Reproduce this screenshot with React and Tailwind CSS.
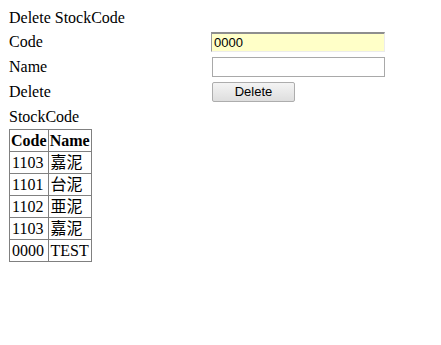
import React from 'react';

const rows = [
  ['1103', '嘉泥'],
  ['1101', '台泥'],
  ['1102', '亜泥'],
  ['1103', '嘉泥'],
  ['0000', 'TEST'],
];

export default function App() {
  return (
    <div className="w-[441px] h-[345px] bg-white pl-[9px] pt-[9px] text-[16px] text-black font-['Liberation_Serif',serif]">
      <div className="h-[20px] leading-[18px]">Delete StockCode</div>

      <div className="flex items-center h-[25px]">
        <div className="w-[202px]">Code</div>
        <input
          defaultValue="0000"
          className="w-[174px] h-[20px] bg-[#ffffc8] border border-t-2 border-t-[#8e8e8e] border-l-[#9a9a9a] border-r-[#ececec] border-b-[#ececec] px-[2px] text-[13px] leading-[16px] font-['Liberation_Sans',sans-serif] outline-none"
        />
      </div>

      <div className="flex items-center h-[25px]">
        <div className="w-[203px]">Name</div>
        <input className="w-[173px] h-[20px] bg-white border border-[#a9a9a9] px-[2px] text-[13px] font-['Liberation_Sans',sans-serif] outline-none" />
      </div>

      <div className="flex items-center h-[25px]">
        <div className="w-[203px]">Delete</div>
        <button className="w-[83px] h-[20px] border border-[#adadad] rounded-[2px] bg-gradient-to-b from-[#f4f4f4] to-[#dedede] text-[13px] leading-[16px] font-['Liberation_Sans',sans-serif]">
          Delete
        </button>
      </div>

      <div className="h-[25px] flex items-center">StockCode</div>

      <table className="border-collapse border border-[#808080]">
        <thead>
          <tr>
            <th className="border border-[#808080] h-[22px] px-[1px] leading-[18px] font-bold">Code</th>
            <th className="border border-[#808080] h-[22px] px-[1px] leading-[18px] font-bold">Name</th>
          </tr>
        </thead>
        <tbody>
          {rows.map((r, i) => (
            <tr key={i}>
              <td className="border border-[#808080] h-[22px] px-[2px] py-0 leading-[18px]">{r[0]}</td>
              <td className="border border-[#808080] h-[22px] px-[2px] py-0 leading-[18px] font-['Liberation_Serif','Noto_Sans_CJK_JP',serif]">{r[1]}</td>
            </tr>
          ))}
        </tbody>
      </table>
    </div>
  );
}
